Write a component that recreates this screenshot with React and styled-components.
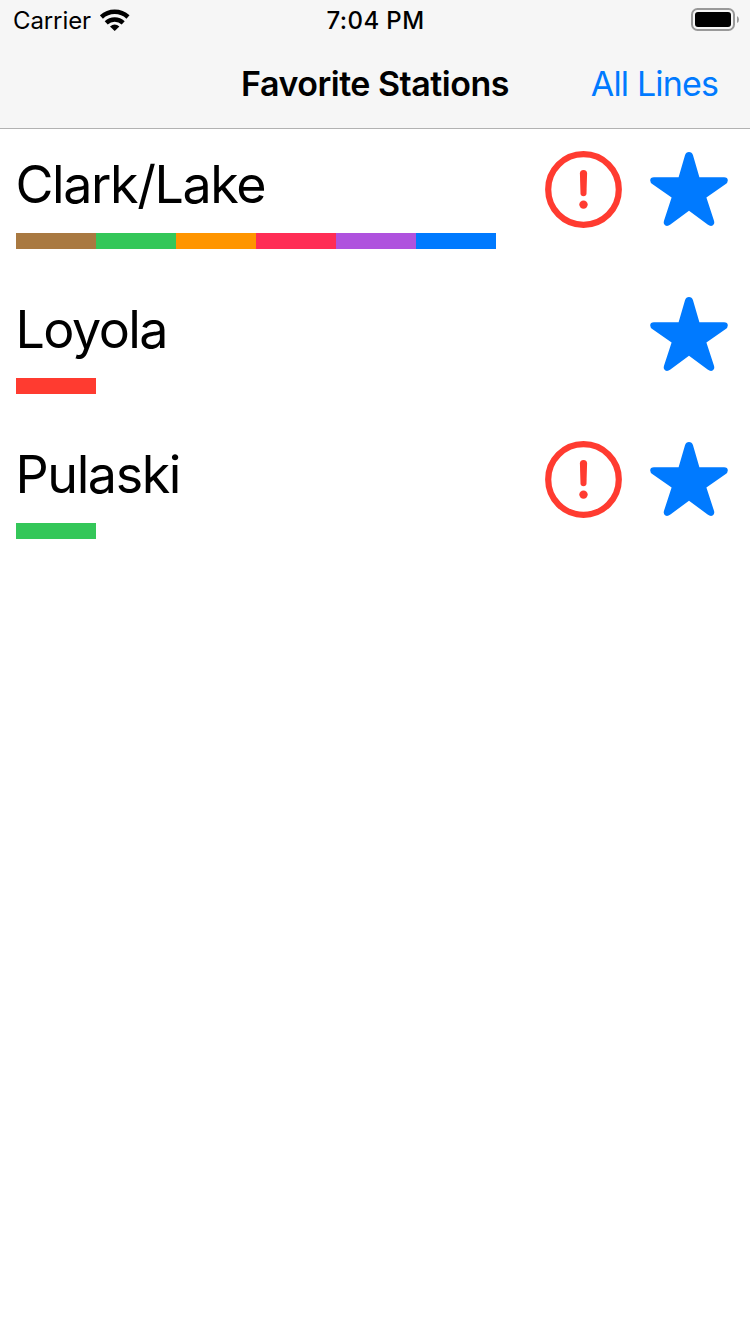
import React from 'react';
import styled, { createGlobalStyle } from 'styled-components';

const GlobalStyle = createGlobalStyle`
  * { box-sizing: border-box; }
  body {
    margin: 0;
    background: #fff;
    color: #000;
    font-family: Inter, 'Liberation Sans', sans-serif;
  }
`;

const Screen = styled.main`
  width: 750px;
  min-height: 1334px;
  background: #fff;
`;

const Header = styled.header`
  height: 129px;
  background: #f6f6f6;
  border-bottom: 1px solid #b2b2b2;
`;

const StatusBar = styled.div`
  display: grid;
  grid-template-columns: 1fr auto 1fr;
  align-items: center;
  height: 40px;
  padding: 0 12px 0 13px;
  font-size: 24px;
  line-height: 42px;
`;

const Carrier = styled.div`
  display: flex;
  align-items: center;
  gap: 9px;
  height: 40px;
  letter-spacing: -0.1px;
`;

const CarrierName = styled.span`
  padding-top: 2px;
`;

const Clock = styled.div`
  height: 40px;
  font-weight: 500;
  letter-spacing: 0.4px;
`;

const Power = styled.div`
  display: flex;
  justify-content: flex-end;
  margin-right: -1px;
`;

const NavBar = styled.nav`
  display: grid;
  grid-template-columns: 1fr auto 1fr;
  align-items: center;
  height: 88px;
  padding: 0 32px;
  font-size: 34px;
  line-height: 88px;
`;

const Title = styled.h1`
  grid-column: 2;
  margin: 0;
  font-size: 34px;
  font-weight: 600;
  letter-spacing: -0.5px;
`;

const NavButton = styled.a`
  justify-self: end;
  color: #007aff;
  letter-spacing: -0.85px;
`;

const StationList = styled.ul`
  margin: 0;
  padding: 0;
  list-style: none;
`;

const StationRow = styled.li`
  display: flex;
  justify-content: space-between;
  height: 145px;
  padding: 22px 22px 0 16px;
`;

const StationInfo = styled.div`
  display: flex;
  flex-direction: column;
  gap: 18px;
`;

const StationName = styled.div`
  height: 64px;
  margin-left: -0.5px;
  font-size: 52px;
  line-height: 68px;
  letter-spacing: ${({ $tracking }) => $tracking}px;
`;

const LineStrip = styled.div`
  display: flex;
`;

const LineSwatch = styled.span`
  width: 80px;
  height: 16px;
  background: ${({ $color }) => $color};
`;

const Actions = styled.div`
  display: flex;
  gap: 27px;
`;

const WifiIcon = () => (
  <svg width="30" height="22" viewBox="0 0 30 22" fill="none" stroke="#000">
    <path d="M1.4 8A19.6 19.6 0 0 1 28 8" strokeWidth="4.5" />
    <path d="M6.2 13.9A12.4 12.4 0 0 1 23.2 13.9" strokeWidth="4.4" />
    <path d="M10 17.6Q14.7 13.3 19.4 17.6L14.7 22Z" fill="#000" stroke="none" />
  </svg>
);

const BatteryIcon = () => (
  <svg width="48" height="24" viewBox="0 0 48 24">
    <rect x="1" y="1" width="42" height="21" rx="5.5" fill="none" stroke="#999" strokeWidth="2" />
    <rect x="4" y="4" width="36" height="15" rx="3" />
    <path d="M46 8Q48 9 48 11.5T46 15Z" fill="#999" />
  </svg>
);

const AlertIcon = () => (
  <svg width="78" height="78" viewBox="0 0 78 78" fill="#ff3b30">
    <circle cx="38.5" cy="38.5" r="35.3" fill="none" stroke="#ff3b30" strokeWidth="6.2" />
    <path d="M34.9 22.5Q34.9 19 38.5 19T42.1 22.5L41.5 42.5Q41.3 45.3 38.5 45.3T35.5 42.5Z" />
    <circle cx="38.5" cy="53.6" r="4.2" />
  </svg>
);

const StarIcon = () => (
  <svg width="78" height="78" viewBox="0 0 78 78" fill="#007aff">
    <path d="M39 1Q41.9 1 43 4.2L49.4 26.3H74Q77.8 26.4 77.8 29.4Q77.8 31.6 75.4 33.2L56.4 46.6L64 69.8Q65 73 62.6 74.5Q60.4 75.6 57.6 73.5L39 59.7L20.4 73.5Q17.6 75.6 15.4 74.5Q13 73 14 69.8L21.6 46.6L2.6 33.2Q0.2 31.6 0.2 29.4Q0.2 26.4 4 26.3H28.6L35 4.2Q36.1 1 39 1Z" />
  </svg>
);

const brown = '#a97941';
const green = '#34c759';
const orange = '#ff9500';
const pink = '#ff2d55';
const purple = '#af52de';
const blue = '#007aff';
const red = '#ff3b30';

const stations = [
  { name: 'Clark/Lake', lines: [brown, green, orange, pink, purple, blue], alert: true, tracking: -1.4 },
  { name: 'Loyola', lines: [red], alert: false, tracking: -1.55 },
  { name: 'Pulaski', lines: [green], alert: true, tracking: -1.4 },
];

export default function App() {
  return (
    <>
      <GlobalStyle />
      <Screen>
        <Header>
          <StatusBar>
            <Carrier>
              <CarrierName>Carrier</CarrierName>
              <WifiIcon />
            </Carrier>
            <Clock>7:04 PM</Clock>
            <Power>
              <BatteryIcon />
            </Power>
          </StatusBar>
          <NavBar>
            <Title>Favorite Stations</Title>
            <NavButton>All Lines</NavButton>
          </NavBar>
        </Header>
        <StationList>
          {stations.map(({ name, lines, alert, tracking }) => (
            <StationRow key={name}>
              <StationInfo>
                <StationName $tracking={tracking}>{name}</StationName>
                <LineStrip>
                  {lines.map((color) => (
                    <LineSwatch key={color} $color={color} />
                  ))}
                </LineStrip>
              </StationInfo>
              <Actions>
                {alert && <AlertIcon />}
                <StarIcon />
              </Actions>
            </StationRow>
          ))}
        </StationList>
      </Screen>
    </>
  );
}
